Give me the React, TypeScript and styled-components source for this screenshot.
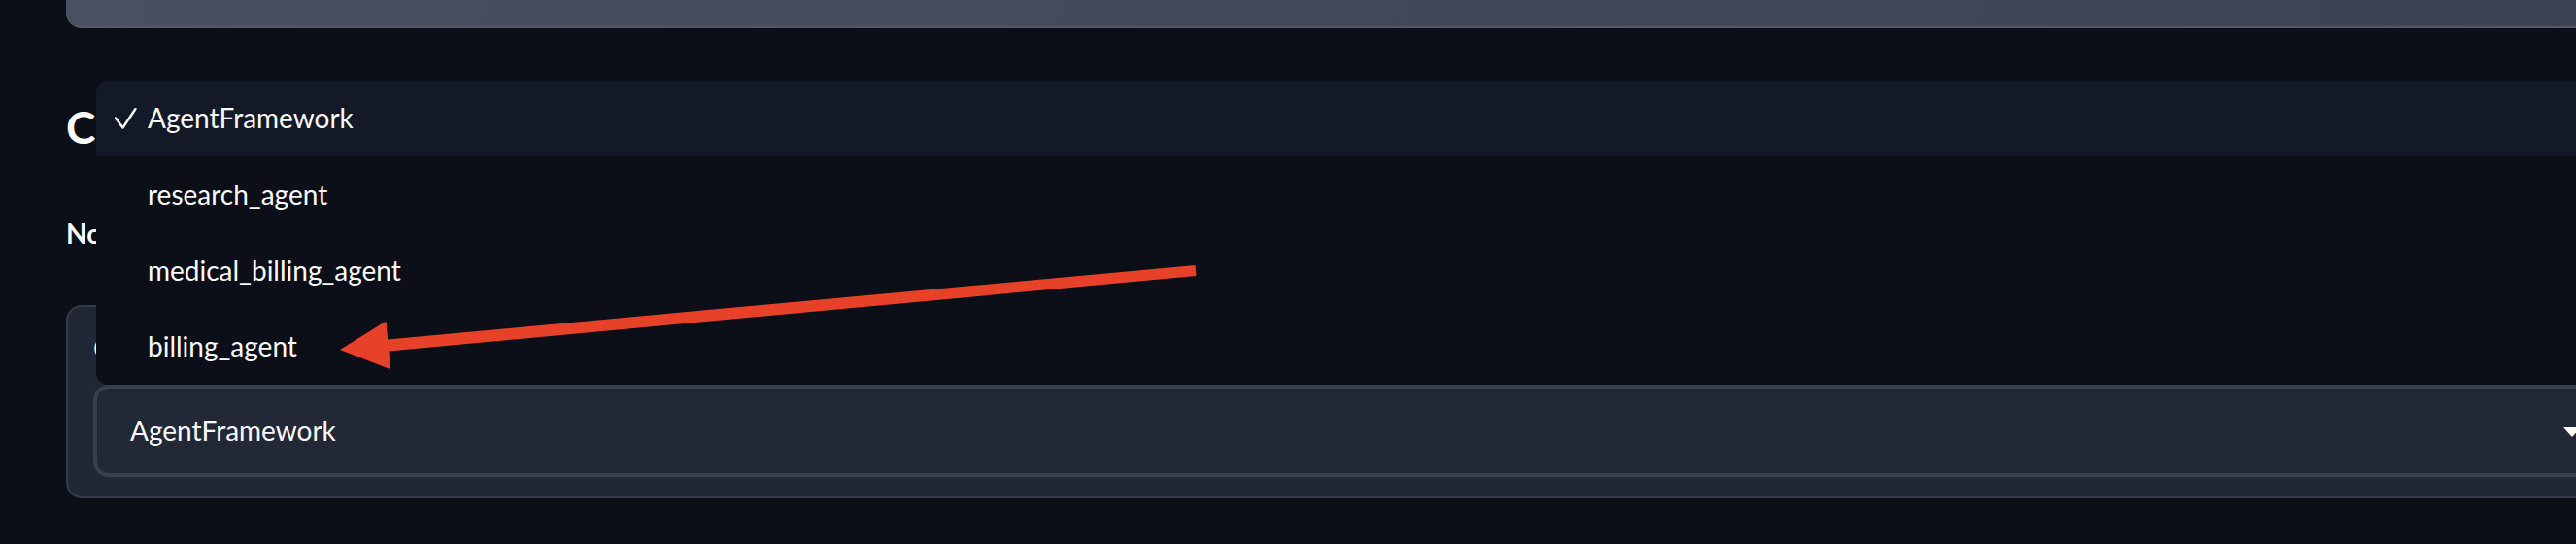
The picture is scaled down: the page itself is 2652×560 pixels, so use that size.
import React from "react";
import styled, { createGlobalStyle } from "styled-components";

const Global = createGlobalStyle`
  * { box-sizing: border-box; }
  html, body {
    margin: 0;
    padding: 0;
    background: #0c0f17;
    overflow: hidden;
  }
  body {
    width: 2652px;
    height: 560px;
    font-family: Lato, "Noto Sans", "DejaVu Sans", sans-serif;
    color: #fafafa;
  }
`;

const Page = styled.div`
  position: relative;
  width: 2652px;
  height: 560px;
  overflow: hidden;
  background: #0c0f17;
`;

const Column = styled.main`
  width: 2645px;
  margin-left: 68px;
  display: flex;
  flex-direction: column;
`;

const TopPanel = styled.div`
  height: 29px;
  border-bottom: 2px solid #535969;
  border-radius: 0 0 16px 16px;
  background: linear-gradient(to right, #4a5061, #3d4252);
`;

const Heading = styled.h3`
  margin: 74px 0 0;
  font-size: 46px;
  font-weight: 700;
  line-height: 1.2;
  white-space: nowrap;
`;

const Note = styled.p`
  margin: 66px 0 0;
  font-size: 28px;
  font-weight: 700;
  line-height: 1.2;
  white-space: nowrap;
`;

const Card = styled.section`
  margin-top: 56px;
  border: 2px solid #363b4a;
  border-radius: 16px;
  background: #222735;
  padding: 26px 26px 20px;
  display: flex;
  flex-direction: column;
  gap: 21px;
`;

const FieldLabel = styled.label`
  font-size: 28px;
  line-height: 1.2;
  white-space: nowrap;
`;

const SelectBox = styled.div`
  height: 95px;
  border: 4px solid #3a3f4e;
  border-radius: 16px;
  background: #232836;
  padding: 0 24px 0 34px;
  display: flex;
  align-items: center;
  justify-content: space-between;
  font-size: 28px;
  line-height: 1.2;
`;

const Caret = styled.svg`
  width: 18px;
  height: 10px;
  display: block;
  margin-top: 2px;
`;

const Menu = styled.ul`
  position: absolute;
  left: 99px;
  top: 83px;
  width: 2600px;
  margin: 0;
  padding: 0;
  list-style: none;
  background: #0c0f17;
  border-radius: 12px 0 0 12px;
  overflow: hidden;
  display: flex;
  flex-direction: column;
`;

const Option = styled.li<{ $active?: boolean }>`
  height: 78.25px;
  display: flex;
  align-items: center;
  padding-left: 19px;
  font-size: 28px;
  line-height: 1.2;
  background: ${(p) => (p.$active ? "#131927" : "transparent")};
`;

const CheckSlot = styled.span`
  width: 34px;
  height: 22px;
  display: flex;
  align-items: center;
`;

const Annotation = styled.svg`
  position: absolute;
  left: 0;
  top: 0;
  width: 2652px;
  height: 560px;
  pointer-events: none;
`;

const options = ["AgentFramework", "research_agent", "medical_billing_agent", "billing_agent"];

export default function App() {
  return (
    <Page>
      <Global />
      <Column>
        <TopPanel />
        <Heading>Configuration</Heading>
        <Note>Note: select the agent you want to run</Note>
        <Card>
          <FieldLabel>Choose an agent</FieldLabel>
          <SelectBox>
            <span>AgentFramework</span>
            <Caret viewBox="0 0 18 10">
              <path d="M0 0 L18 0 L9.8 9.2 Q9 10 8.2 9.2 Z" fill="#fafafa" />
            </Caret>
          </SelectBox>
        </Card>
      </Column>
      <Menu>
        {options.map((o, i) => (
          <Option key={o} $active={i === 0}>
            <CheckSlot>
              {i === 0 && (
                <svg width="23" height="22" viewBox="0 0 23 22">
                  <polyline
                    points="1,10.5 8.5,20.5 21.5,1"
                    fill="none"
                    stroke="#fafafa"
                    strokeWidth="2.4"
                    strokeLinecap="round"
                    strokeLinejoin="round"
                  />
                </svg>
              )}
            </CheckSlot>
            <span>{o}</span>
          </Option>
        ))}
      </Menu>
      <Annotation viewBox="0 0 2652 560">
        <polygon
          points="350,360 397.5,330.5 399.2,349.4 1230.5,273 1231.5,284 400.4,361.4 402.1,380.3"
          fill="#e8412a"
        />
      </Annotation>
    </Page>
  );
}
